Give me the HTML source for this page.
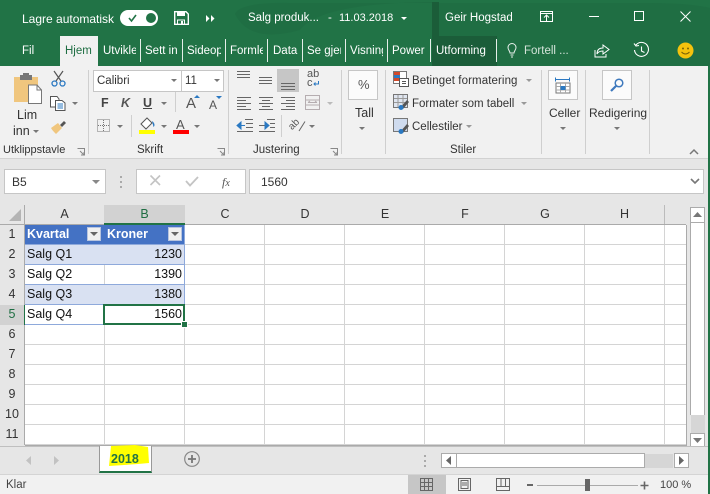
<!DOCTYPE html>
<html><head><meta charset="utf-8"><style>
html,body{margin:0;padding:0}
body{width:710px;height:494px;overflow:hidden;position:relative;background:#f1f1f1;font-family:"Liberation Sans",sans-serif;color:#333}
.a,.t,.h,.c{position:absolute}
.t{white-space:nowrap;font-size:11px;line-height:14px}
.w{color:#fff}
.sep{position:absolute;width:1px;background:#cfcfcf}
.tsep{position:absolute;width:1px;top:39px;height:23px;background:#e5eee9}
.h{background:#e6e6e6;text-align:center;font-size:12.5px;line-height:19px;color:#333;box-sizing:border-box}
.c{font-size:12.5px;line-height:19px;color:#111;white-space:nowrap}
svg{position:absolute;overflow:visible}
.dd{position:absolute;width:0;height:0;border-left:3px solid transparent;border-right:3px solid transparent;border-top:3px solid #777}
</style></head><body>

<!-- title bar -->
<div class="a" style="left:0;top:0;width:710px;height:66px;background:#217346"></div>
<svg style="left:0;top:0" width="710" height="66"><path d="M235 14 Q240 2 290 3 L650 3 Q690 3 710 8 L710 66 L440 66 L440 36 L432 36 L432 2 Q320 3 300 30 Q250 44 235 14Z" fill="#1f6e43"/><rect x="432" y="2" width="7" height="34" fill="#1b5d39"/><rect x="432" y="36" width="65" height="30" fill="#1b5d39"/></svg>
<div class="t w" style="left:22px;top:12px;font-size:12px">Lagre automatisk</div>
<div class="a" style="left:120px;top:10px;width:38px;height:16px;border-radius:8px;background:#fff"></div>
<div class="a" style="left:146px;top:13px;width:10px;height:10px;border-radius:5px;background:#217346"></div>
<svg style="left:127px;top:13px" width="12" height="10"><path d="M2 5 L4.500 8 L9 2" fill="none" stroke="#217346" stroke-width="1.600"/></svg>
<svg style="left:174px;top:11px" width="15" height="14"><path d="M.7.7H12L14.300 3V13.300H.7Z" fill="none" stroke="#fff" stroke-width="1.400"/><rect x="3" y="1" width="8" height="4" fill="#fff"/><rect x="3.500" y="9" width="7" height="4.500" fill="none" stroke="#fff"/><rect x="7" y="10" width="2" height="3.500" fill="#fff"/></svg>
<svg style="left:206px;top:15px" width="9" height="7"><path d="M0 0L3.500 3.500L0 7ZM5 0L8.500 3.500L5 7Z" fill="#fff"/></svg>
<div class="t w" style="left:248px;top:11px;font-size:11.500px">Salg produk...</div>
<div class="t w" style="left:328px;top:11px;font-size:11.500px">-</div>
<div class="t w" style="left:339px;top:11px;font-size:11px">11.03.2018</div>
<div class="dd" style="left:401px;top:17px;border-top-color:#fff"></div>
<div class="t w" style="left:445px;top:11px;font-size:11.500px">Geir Hogstad</div>
<svg style="left:540px;top:11px" width="13" height="11"><rect x=".5" y=".5" width="12" height="10" fill="none" stroke="#fff"/><path d="M.5 2.500H12.500M6.500 10V4.500M4 6.500L6.500 4L9 6.500" fill="none" stroke="#fff"/></svg>
<div class="a" style="left:589px;top:16px;width:10px;height:1px;background:#fff"></div>
<div class="a" style="left:634px;top:11px;width:8px;height:8px;border:1px solid #fff"></div>
<svg style="left:680px;top:11px" width="11" height="11"><path d="M.5.500L10.500 10.500M10.500.500L.5 10.500" stroke="#fff" fill="none"/></svg>

<!-- tabs -->
<div class="a" style="left:60px;top:36px;width:38px;height:30px;background:#f1f1f1"></div>
<div class="t w" style="left:22px;top:44px;font-size:11.500px">Fil</div>
<div class="t" style="left:65px;top:44px;font-size:11.500px;color:#1f6e43">Hjem</div>
<div class="t w" style="left:103px;top:44px;font-size:11.500px;width:33px;overflow:hidden">Utvikler</div>
<div class="tsep" style="left:140px"></div>
<div class="t w" style="left:145px;top:44px;font-size:11.500px;width:33px;overflow:hidden">Sett inn</div>
<div class="tsep" style="left:182px"></div>
<div class="t w" style="left:187px;top:44px;font-size:11.500px;width:34px;overflow:hidden">Sideoppsett</div>
<div class="tsep" style="left:225px"></div>
<div class="t w" style="left:230px;top:44px;font-size:11.500px;width:33px;overflow:hidden">Formler</div>
<div class="tsep" style="left:267px"></div>
<div class="t w" style="left:273px;top:44px;font-size:11.500px">Data</div>
<div class="tsep" style="left:302px"></div>
<div class="t w" style="left:307px;top:44px;font-size:11.500px;width:34px;overflow:hidden">Se gjennom</div>
<div class="tsep" style="left:345px"></div>
<div class="t w" style="left:350px;top:44px;font-size:11.500px;width:33px;overflow:hidden">Visning</div>
<div class="tsep" style="left:387px"></div>
<div class="t w" style="left:392px;top:44px;font-size:11.500px">Power</div>
<div class="tsep" style="left:430px"></div>
<div class="t w" style="left:436px;top:44px;font-size:11.500px">Utforming</div>
<div class="tsep" style="left:496px"></div>
<svg style="left:507px;top:43px" width="10" height="15"><path d="M3 10C3 8 1 7 1 4.500A4 4 0 0 1 9 4.500C9 7 7 8 7 10ZM3.500 12H6.500M4 14H6" fill="none" stroke="#e8f0ec"/></svg>
<div class="t" style="left:524px;top:44px;font-size:11.500px;color:#d4e4da">Fortell ...</div>
<svg style="left:594px;top:44px" width="16" height="14"><path d="M9 1L15 5.500L9 10V7C6 7 4 8 3 10C3 6 5 4 9 4Z M1 6V13H12V10" fill="none" stroke="#fff"/></svg>
<svg style="left:633px;top:42px" width="17" height="17"><path d="M3 3A7 7 0 1 1 1.500 8M1 1.500L3 4L6 3.500M8.500 4.500V9L11.500 10.500" fill="none" stroke="#fff" stroke-width="1.100"/></svg>
<svg style="left:677px;top:42px" width="17" height="17"><circle cx="8.500" cy="8.500" r="8" fill="#f4c20d"/><circle cx="6" cy="6.500" r="1" fill="#7a6207"/><circle cx="11" cy="6.500" r="1" fill="#7a6207"/><path d="M4.500 10Q8.500 14 12.500 10" fill="none" stroke="#7a6207"/></svg>

<!-- ribbon -->
<div class="a" style="left:0;top:66px;width:708px;height:92px;background:#f1f1f1"></div>
<div class="a" style="left:0;top:158px;width:708px;height:1px;background:#d2d2d2"></div>
<div class="a" style="left:708px;top:66px;width:2px;height:428px;background:#217346"></div>
<div class="sep" style="left:88px;top:70px;height:84px"></div>
<div class="sep" style="left:228px;top:70px;height:84px"></div>
<div class="sep" style="left:341px;top:70px;height:84px"></div>
<div class="sep" style="left:385px;top:70px;height:84px"></div>
<div class="sep" style="left:541px;top:70px;height:84px"></div>
<div class="sep" style="left:585px;top:70px;height:84px"></div>
<div class="sep" style="left:649px;top:70px;height:84px"></div>

<!-- clipboard -->
<svg style="left:14px;top:73px" width="30" height="32"><path d="M0 4H24V29H0Z" fill="#f0c67e"/><rect x="6" y="2" width="12" height="5" fill="#777"/><rect x="9" y="0" width="6" height="3" fill="#777"/><path d="M14.500 12H23L27.500 17V30.500H14.500Z" fill="#fff" stroke="#777"/><path d="M23 12V17H27.500" fill="none" stroke="#777"/></svg>
<div class="t" style="left:17px;top:108px;font-size:12.500px">Lim</div>
<div class="t" style="left:13px;top:124px;font-size:12.500px">inn</div>
<div class="dd" style="left:33px;top:130px"></div>
<svg style="left:51px;top:71px" width="15" height="16"><path d="M3 0L10 10M12 0L5 10" stroke="#555" stroke-width="1.200" fill="none"/><circle cx="3.500" cy="12.500" r="2.500" fill="none" stroke="#2b79c2" stroke-width="1.300"/><circle cx="11.500" cy="12.500" r="2.500" fill="none" stroke="#2b79c2" stroke-width="1.300"/></svg>
<svg style="left:50px;top:96px" width="16" height="15"><path d="M.5.500H7L9 3V11H.5Z" fill="#fff" stroke="#555"/><path d="M5.500 4.500H12L15 7V14.500H5.500Z" fill="#fff" stroke="#555"/><path d="M7.500 8H13M7.500 10H13M7.500 12H13" stroke="#2b79c2"/></svg>
<div class="dd" style="left:72px;top:102px"></div>
<svg style="left:50px;top:119px" width="17" height="16"><path d="M10 6L14 2L16 4L12 8Z" fill="#555"/><path d="M1 9L8 4L12 9L6 15C4 13 2 11 1 9Z" fill="#f0c67e"/></svg>
<div class="t" style="left:3px;top:143px;font-size:11px">Utklippstavle</div>
<svg style="left:77px;top:148px" width="8" height="8"><path d="M.5.500H7.500V7.500M3 3L7 7M4 7H7V4" fill="none" stroke="#888"/></svg>

<!-- font -->
<div class="a" style="left:93px;top:70px;width:87px;height:20px;background:#fff;border:1px solid #c6c6c6"></div>
<div class="t" style="left:97px;top:74px;font-size:11.500px">Calibri</div>
<div class="dd" style="left:171px;top:79px"></div>
<div class="a" style="left:181px;top:70px;width:41px;height:20px;background:#fff;border:1px solid #c6c6c6"></div>
<div class="t" style="left:185px;top:74px;font-size:11.500px">11</div>
<div class="dd" style="left:214px;top:79px"></div>
<div class="t" style="left:101px;top:96px;font-size:12.500px;font-weight:bold;color:#444">F</div>
<div class="t" style="left:121px;top:96px;font-size:12.500px;font-weight:bold;font-style:italic;color:#555">K</div>
<div class="t" style="left:143px;top:96px;font-size:12.500px;font-weight:bold;color:#444;text-decoration:underline">U</div>
<div class="dd" style="left:161px;top:102px"></div>
<div class="sep" style="left:175px;top:92px;height:20px"></div>
<div class="t" style="left:186px;top:97px;font-size:15px;color:#555">A</div>
<svg style="left:194px;top:95px" width="6" height="4"><path d="M0 3L3 0L6 3Z" fill="#2b79c2"/></svg>
<div class="t" style="left:209px;top:98px;font-size:12px;color:#555">A</div>
<svg style="left:216px;top:96px" width="6" height="4"><path d="M0 0L3 3L6 0Z" fill="#2b79c2"/></svg>
<svg style="left:97px;top:119px" width="14" height="13"><rect x=".5" y=".5" width="12" height="12" fill="none" stroke="#777" stroke-dasharray="1 1"/><path d="M6.500 1V12M1 6.500H12" stroke="#777" stroke-dasharray="1 1"/></svg>
<div class="dd" style="left:117px;top:125px"></div>
<div class="sep" style="left:131px;top:115px;height:22px"></div>
<svg style="left:140px;top:118px" width="16" height="12"><path d="M1 6L7 0L12 5L6 11Z" fill="#fff" stroke="#555"/><path d="M12 3C15 5 15 8 13.500 9Z" fill="#2b79c2"/></svg>
<div class="a" style="left:139px;top:130px;width:16px;height:4px;background:#ff0"></div>
<div class="dd" style="left:161px;top:125px"></div>
<div class="t" style="left:176px;top:118px;font-size:13px;color:#555">A</div>
<div class="a" style="left:173px;top:130px;width:16px;height:4px;background:#f00"></div>
<div class="dd" style="left:194px;top:125px"></div>
<div class="t" style="left:137px;top:143px;font-size:11.500px">Skrift</div>
<svg style="left:217px;top:148px" width="8" height="8"><path d="M.5.500H7.500V7.500M3 3L7 7M4 7H7V4" fill="none" stroke="#888"/></svg>

<!-- alignment -->
<div class="a" style="left:277px;top:69px;width:22px;height:23px;background:#c6c6c6"></div>
<svg style="left:236px;top:71px" width="60" height="20"><path d="M1 .5H14M1 3.500H14M1 6.500H14M23 6.500H36M23 9.500H36M23 12.500H36M45 12.500H59M45 15.500H59M45 18.500H59" stroke="#666" fill="none"/></svg>
<div class="t" style="left:307px;top:70px;font-size:11px;line-height:9px;color:#555">ab<br>c</div>
<svg style="left:313px;top:81px" width="6" height="5"><path d="M5.500 0V3H1M2.500 1.500L1 3L2.500 4.500" stroke="#2b79c2" fill="none"/></svg>
<svg style="left:236px;top:97px" width="60" height="13"><path d="M1 .5H15M1 3.500H10M1 6.500H15M1 9.500H10M1 12.500H15M23 .5H37M26 3.500H34M23 6.500H37M26 9.500H34M23 12.500H37M45 .5H59M50 3.500H59M45 6.500H59M50 9.500H59M45 12.500H59" stroke="#666" fill="none"/></svg>
<svg style="left:305px;top:95px" width="15" height="15"><rect x=".5" y=".5" width="14" height="14" fill="none" stroke="#b5adb0"/><path d="M.5 5H14.500M.5 10H14.500M3 7.500H12M3 7.500L5 6M12 7.500L10 6" stroke="#b5adb0" fill="none"/></svg>
<div class="dd" style="left:327px;top:102px;border-top-color:#bbb"></div>
<svg style="left:236px;top:119px" width="40" height="13"><path d="M1 6.500L5 3V10Z M5 6.500H9" fill="#2b79c2" stroke="#2b79c2"/><path d="M9 .5H17M10 4.500H17M10 8.500H17M1 12.500H17M23 6.500H29" stroke="#666" fill="none"/><path d="M33 6.500L29 3V10Z" fill="#2b79c2" stroke="#2b79c2"/><path d="M31 .5H39M34 4.500H39M34 8.500H39M23 12.500H39" stroke="#666" fill="none"/></svg>
<div class="sep" style="left:281px;top:115px;height:22px"></div>
<div class="t" style="left:289px;top:118px;font-size:10px;color:#555;transform:rotate(-45deg)">ab</div>
<svg style="left:298px;top:121px" width="8" height="11"><path d="M7 .5L1 10" stroke="#666" fill="none"/></svg>
<div class="dd" style="left:309px;top:125px"></div>
<div class="t" style="left:253px;top:143px;font-size:11.500px">Justering</div>
<svg style="left:330px;top:148px" width="8" height="8"><path d="M.5.500H7.500V7.500M3 3L7 7M4 7H7V4" fill="none" stroke="#888"/></svg>

<!-- number -->
<div class="a" style="left:348px;top:70px;width:28px;height:28px;background:#fbfbfb;border:1px solid #c6c6c6"></div>
<div class="t" style="left:358px;top:78px;font-size:13px;color:#555">%</div>
<div class="t" style="left:355px;top:106px;font-size:12.500px">Tall</div>
<div class="dd" style="left:359px;top:127px"></div>

<!-- styles -->
<svg style="left:393px;top:71px" width="16" height="16"><rect x=".5" y=".5" width="13" height="12" fill="#fff" stroke="#777"/><rect x="1" y="1" width="6" height="3" fill="#d2492a"/><rect x="1" y="4" width="6" height="3" fill="#2b79c2"/><rect x="1" y="7" width="6" height="3" fill="#d2492a"/><rect x="6.500" y="7.500" width="9" height="8" fill="#fff" stroke="#555"/><path d="M9 10.500H13M9 12.500H13" stroke="#555"/></svg>
<div class="t" style="left:412px;top:74px;font-size:11.500px;letter-spacing:.1px">Betinget formatering</div>
<div class="dd" style="left:526px;top:79px;border-top-color:#999"></div>
<svg style="left:393px;top:94px" width="17" height="16"><rect x=".5" y=".5" width="14" height="13" fill="#dfe5ef" stroke="#777"/><path d="M1 4.500H14M1 8.500H14M5 1V13M10 1V13" stroke="#999"/><path d="M7 14L14 6L16 8L10 15Z" fill="#555"/><circle cx="8" cy="13.500" r="2.500" fill="#2b79c2"/></svg>
<div class="t" style="left:412px;top:97px;font-size:11.500px">Formater som tabell</div>
<div class="dd" style="left:521px;top:102px;border-top-color:#999"></div>
<svg style="left:393px;top:118px" width="17" height="16"><rect x=".5" y=".5" width="14" height="13" fill="#cfdbee" stroke="#777"/><path d="M7 14L14 6L16 8L10 15Z" fill="#555"/><circle cx="8" cy="13.500" r="2.500" fill="#2b79c2"/></svg>
<div class="t" style="left:412px;top:120px;font-size:11.500px">Cellestiler</div>
<div class="dd" style="left:466px;top:125px;border-top-color:#999"></div>
<div class="t" style="left:450px;top:143px;font-size:11.500px">Stiler</div>

<!-- cells -->
<div class="a" style="left:548px;top:70px;width:28px;height:28px;background:#fbfbfb;border:1px solid #c6c6c6"></div>
<svg style="left:555px;top:77px" width="15" height="16"><path d="M.5 2.500H14.500M.5.500V4.500M14.500.500V4.500" stroke="#2b79c2" fill="none"/><rect x="1" y="6" width="14" height="10" fill="#fff" stroke="#777"/><path d="M1 9.500H15M1 13H15M5.500 6V16M10.500 6V16" stroke="#aaa"/><rect x="5.500" y="9" width="5" height="4" fill="#2b79c2"/></svg>
<div class="t" style="left:549px;top:106px;font-size:12px">Celler</div>
<div class="dd" style="left:560px;top:127px"></div>

<!-- edit -->
<div class="a" style="left:602px;top:70px;width:28px;height:28px;background:#fbfbfb;border:1px solid #c6c6c6"></div>
<svg style="left:610px;top:78px" width="14" height="14"><circle cx="9" cy="5" r="3.800" fill="none" stroke="#3e79bd" stroke-width="1.500"/><path d="M6 8L1 13" stroke="#3e79bd" stroke-width="2.200"/></svg>
<div class="t" style="left:589px;top:106px;font-size:12px">Redigering</div>
<div class="dd" style="left:614px;top:127px"></div>
<svg style="left:689px;top:149px" width="10" height="6"><path d="M1 5L5 1L9 5" fill="none" stroke="#777" stroke-width="1.500"/></svg>

<!-- formula bar -->
<div class="a" style="left:0;top:159px;width:708px;height:46px;background:#e6e6e6"></div>
<div class="a" style="left:4px;top:169px;width:100px;height:23px;background:#fff;border:1px solid #c6c6c6"></div>
<div class="t" style="left:12px;top:175px;font-size:12px">B5</div>
<div class="dd" style="left:92px;top:180px;border-left-width:4px;border-right-width:4px;border-top-width:4px;border-top-color:#888"></div>
<div class="a" style="left:120px;top:176px;width:2px;height:2px;background:#aaa;box-shadow:0 5px #aaa,0 10px #aaa"></div>
<div class="a" style="left:136px;top:169px;width:108px;height:23px;background:#fff;border:1px solid #c6c6c6"></div>
<svg style="left:150px;top:175px" width="11" height="11"><path d="M.5.500L10 10M10 .5L.5 10" stroke="#c4c4c4" stroke-width="1.600" fill="none"/></svg>
<svg style="left:185px;top:176px" width="14" height="11"><path d="M1 5L5 9.500L13 1" stroke="#c4c4c4" stroke-width="1.800" fill="none"/></svg>
<div class="t" style="left:222px;top:175px;font-size:12px;font-family:'Liberation Serif',serif;font-style:italic;color:#555">f<span style="font-size:10px">x</span></div>
<div class="a" style="left:249px;top:169px;width:453px;height:23px;background:#fff;border:1px solid #c6c6c6"></div>
<div class="t" style="left:261px;top:175px;font-size:12px">1560</div>
<svg style="left:690px;top:178px" width="10" height="6"><path d="M1 1L5 5L9 1" fill="none" stroke="#777" stroke-width="1.600"/></svg>

<!-- grid -->
<div class="a" style="left:0;top:205px;width:708px;height:241px;background:#e6e6e6"></div>
<div class="a" id="g" style="left:25px;top:225px;width:661px;height:220px;background-color:#fff;background-image:linear-gradient(90deg,#d4d4d4 1px,transparent 1px),linear-gradient(#d4d4d4 1px,transparent 1px);background-size:80px 20px;background-position:79px 0,0 19px;border-right:1px solid #aaa;border-bottom:1px solid #aaa"></div>
<svg style="left:8px;top:208px" width="14" height="14"><path d="M13 1V13H1Z" fill="#b4b4b4"/></svg>
<div class="a" style="left:24px;top:205px;width:1px;height:240px;background:#aaa"></div>
<div class="a" style="left:0;top:224px;width:686px;height:1px;background:#aaa"></div>
<div class="h" style="left:25px;top:205px;width:79px;height:19px">A</div>
<div class="h" style="left:104px;top:205px;width:81px;height:20px;background:#d2d2d2;border-bottom:2px solid #217346;color:#1f6e43">B</div>
<div class="h" style="left:185px;top:205px;width:80px;height:19px">C</div>
<div class="h" style="left:265px;top:205px;width:80px;height:19px">D</div>
<div class="h" style="left:345px;top:205px;width:80px;height:19px">E</div>
<div class="h" style="left:425px;top:205px;width:80px;height:19px">F</div>
<div class="h" style="left:505px;top:205px;width:80px;height:19px">G</div>
<div class="h" style="left:585px;top:205px;width:79px;height:19px">H</div>
<div class="a" style="left:664px;top:205px;width:1px;height:19px;background:#bbb"></div>
<div class="h" style="left:0;top:225px;width:24px;height:19px">1</div>
<div class="h" style="left:0;top:245px;width:24px;height:19px">2</div>
<div class="h" style="left:0;top:265px;width:24px;height:19px">3</div>
<div class="h" style="left:0;top:285px;width:24px;height:19px">4</div>
<div class="h" style="left:0;top:305px;width:24px;height:20px;background:#d2d2d2;color:#1f6e43">5</div>
<div class="h" style="left:0;top:325px;width:24px;height:19px">6</div>
<div class="h" style="left:0;top:345px;width:24px;height:19px">7</div>
<div class="h" style="left:0;top:365px;width:24px;height:19px">8</div>
<div class="h" style="left:0;top:385px;width:24px;height:19px">9</div>
<div class="h" style="left:0;top:405px;width:24px;height:19px">10</div>
<div class="h" style="left:0;top:425px;width:24px;height:19px">11</div>

<!-- table -->
<div class="a" style="left:25px;top:225px;width:160px;height:19px;background:#4472c4"></div>
<div class="a" style="left:25px;top:245px;width:160px;height:19px;background:#d9e1f2"></div>
<div class="a" style="left:25px;top:285px;width:160px;height:19px;background:#d9e1f2"></div>
<div class="a" style="left:25px;top:244px;width:160px;height:1px;background:#8ea9db"></div>
<div class="a" style="left:25px;top:264px;width:160px;height:1px;background:#8ea9db"></div>
<div class="a" style="left:25px;top:284px;width:160px;height:1px;background:#8ea9db"></div>
<div class="a" style="left:25px;top:304px;width:160px;height:1px;background:#8ea9db"></div>
<div class="a" style="left:25px;top:324px;width:160px;height:1px;background:#8ea9db"></div>
<div class="a" style="left:184px;top:225px;width:1px;height:100px;background:#8ea9db"></div>
<div class="c" style="left:27px;top:225px;color:#fff;font-weight:bold;font-size:12.500px">Kvartal</div>
<div class="c" style="left:107px;top:225px;color:#fff;font-weight:bold;font-size:12.500px">Kroner</div>
<div class="a" style="left:87px;top:227px;width:14px;height:14px;background:#f0f0f0;border:1px solid #b7c4de;box-sizing:border-box"></div>
<div class="dd" style="left:90px;top:232px;border-left-width:4px;border-right-width:4px;border-top-width:4px;border-top-color:#666"></div>
<div class="a" style="left:168px;top:227px;width:14px;height:14px;background:#f0f0f0;border:1px solid #b7c4de;box-sizing:border-box"></div>
<div class="dd" style="left:171px;top:232px;border-left-width:4px;border-right-width:4px;border-top-width:4px;border-top-color:#666"></div>
<div class="c" style="left:27px;top:245px">Salg Q1</div>
<div class="c" style="left:27px;top:265px">Salg Q2</div>
<div class="c" style="left:27px;top:285px">Salg Q3</div>
<div class="c" style="left:27px;top:305px">Salg Q4</div>
<div class="c" style="right:528px;top:245px">1230</div>
<div class="c" style="right:528px;top:265px">1390</div>
<div class="c" style="right:528px;top:285px">1380</div>
<div class="c" style="right:528px;top:305px">1560</div>
<div class="a" style="left:103px;top:304px;width:78px;height:17px;border:2px solid #217346"></div>
<div class="a" style="left:182px;top:322px;width:5px;height:5px;background:#217346;border:1px solid #fff;margin:-1px"></div>
<div class="a" style="left:24px;top:305px;width:1px;height:20px;background:#217346"></div>

<!-- vscroll -->
<div class="a" style="left:690px;top:207px;width:13px;height:14px;background:#fff;border:1px solid #ababab"></div>
<div class="a" style="left:690px;top:222px;width:13px;height:192px;background:#fff;border:1px solid #ababab;border-bottom:0"></div>
<div class="a" style="left:691px;top:415px;width:14px;height:18px;background:#d6d6d6"></div>
<svg style="left:693px;top:212px" width="9" height="5"><path d="M0 5L4.500 0L9 5Z" fill="#777"/></svg>
<div class="a" style="left:690px;top:433px;width:13px;height:13px;background:#fff;border:1px solid #ababab"></div>
<svg style="left:693px;top:438px" width="9" height="5"><path d="M0 0L4.500 5L9 0Z" fill="#777"/></svg>

<!-- sheet tabs -->
<div class="a" style="left:0;top:446px;width:708px;height:28px;background:#e6e6e6"></div>
<div class="a" style="left:0;top:446px;width:708px;height:0;border-top:1px solid #bfbfbf"></div>
<svg style="left:26px;top:456px" width="34" height="9"><path d="M5 0L0 4.500L5 9ZM28 0L33 4.500L28 9Z" fill="#c2c2c2"/></svg>
<div class="a" style="left:99px;top:446px;width:51px;height:25px;background:#fff;border-left:1px solid #999;border-right:1px solid #999;border-bottom:2px solid #217346"></div>
<svg style="left:108px;top:444px" width="42" height="22"><path d="M3 2L27 1L40 3L41 19L30 20L1 22L2 12Z" fill="#ff0"/></svg>
<div class="t" style="left:111px;top:452px;font-size:12.500px;font-weight:bold;color:#217346">2018</div>
<svg style="left:184px;top:451px" width="16" height="16"><circle cx="8" cy="8" r="7.300" fill="none" stroke="#888" stroke-width="1.200"/><path d="M8 4V12M4 8H12" stroke="#777" stroke-width="1.800"/></svg>
<div class="a" style="left:424px;top:455px;width:2px;height:2px;background:#aaa;box-shadow:0 5px #aaa,0 10px #aaa"></div>
<div class="a" style="left:441px;top:453px;width:14px;height:13px;background:#fff;border:1px solid #ababab"></div>
<svg style="left:446px;top:456px" width="5" height="9"><path d="M5 0L0 4.500L5 9Z" fill="#666"/></svg>
<div class="a" style="left:456px;top:453px;width:187px;height:13px;background:#fff;border:1px solid #ababab"></div>
<div class="a" style="left:645px;top:454px;width:28px;height:14px;background:#d6d6d6"></div>
<div class="a" style="left:674px;top:453px;width:13px;height:13px;background:#fff;border:1px solid #ababab"></div>
<svg style="left:679px;top:456px" width="5" height="9"><path d="M0 0L5 4.500L0 9Z" fill="#666"/></svg>

<!-- status -->
<div class="a" style="left:0;top:474px;width:708px;height:20px;background:#f1f1f1;border-top:1px solid #d4d4d4;box-sizing:border-box"></div>
<div class="t" style="left:6px;top:478px;font-size:11.500px;color:#444">Klar</div>
<div class="a" style="left:408px;top:475px;width:38px;height:19px;background:#c6c6c6"></div>
<svg style="left:420px;top:478px" width="13" height="13"><rect x=".5" y=".5" width="12" height="12" fill="none" stroke="#666"/><path d="M4.500 1V12M8.500 1V12M1 4.500H12M1 8.500H12" stroke="#666"/></svg>
<svg style="left:458px;top:478px" width="13" height="13"><rect x=".5" y=".5" width="12" height="12" fill="none" stroke="#666"/><rect x="3" y="2.500" width="7" height="8" fill="none" stroke="#666"/><path d="M4 5H9M4 7H9" stroke="#666"/></svg>
<svg style="left:496px;top:478px" width="14" height="13"><path d="M.5.500H13.500V12.500H.5ZM.5 8.500H13.500M5 .5V8.500M9.500 .5V8.500" fill="none" stroke="#666"/></svg>
<div class="a" style="left:527px;top:484px;width:6px;height:2px;background:#666"></div>
<div class="a" style="left:537px;top:485px;width:101px;height:1px;background:#aaa"></div>
<div class="a" style="left:585px;top:479px;width:5px;height:12px;background:#666"></div>
<svg style="left:640px;top:481px" width="9" height="9"><path d="M4.500 .5V8.500M.5 4.500H8.500" stroke="#666" stroke-width="1.600"/></svg>
<div class="t" style="left:660px;top:478px;font-size:11px;color:#444">100 %</div>
</body></html>
